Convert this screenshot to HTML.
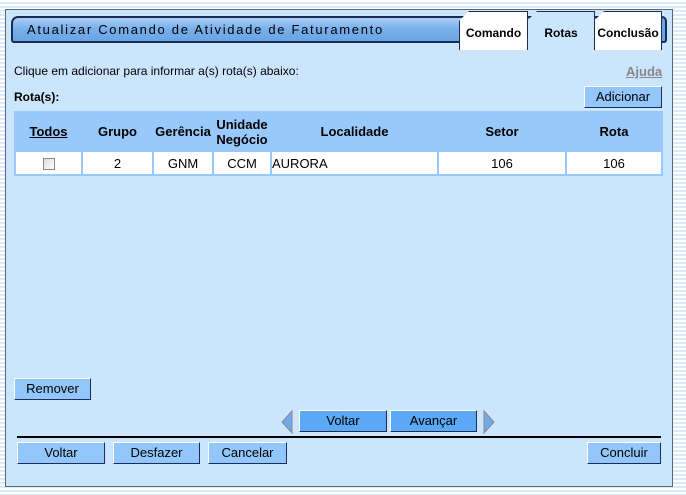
<!DOCTYPE html>
<html><head><meta charset="utf-8"><style>
*{margin:0;padding:0;box-sizing:border-box}
body{width:686px;height:495px;overflow:hidden;font-family:"Liberation Sans",sans-serif;font-size:12px;color:#000;
background:repeating-linear-gradient(#fff 0 2px,#dbeaf8 2px 4px);position:relative}
.panel{position:absolute;left:5px;top:9px;width:668px;height:478px;background:#cbe5fc;border:1px solid #5a6a7a}
.abs{position:absolute}
.title{left:11px;top:16px;width:460px;height:27px;background:linear-gradient(#a8cef4,#77aeea 50%,#6aa4e4);border:2px solid #1a2d55;border-right:none;border-radius:7px 0 0 3px;font-size:13px;letter-spacing:1.7px;padding:4px 0 0 14px}
.tab{top:11px;height:39px;border:1px solid #1a2d55;border-bottom:none;background:#fff;font-weight:bold;font-size:12px;font-family:"Liberation Sans Narrow","Liberation Sans",sans-serif;text-align:center;padding-top:14px;clip-path:polygon(10px 0,100% 0,100% 100%,0 100%,0 10px)}
.btn{position:absolute;height:22px;background:#93c6fb;border:1px solid #fff;border-right-color:#1a2d55;border-bottom-color:#1a2d55;text-align:center;font-size:13px;line-height:20px}
.nb{background:#5aa8f6;border-color:#1a2d55;border-top-color:#fff;border-left-color:#fff}
table{position:absolute;left:14px;top:111px;width:649px;border-collapse:separate;border-spacing:2px;background:#99c9fa}
th{height:37px;font-size:13px;font-weight:bold;line-height:15px}
td{background:#fff;height:22px;text-align:center;font-size:13px}
</style></head><body>
<div class="panel"></div>
<div class="abs title">Atualizar Comando de Atividade de Faturamento</div>
<div class="abs" style="left:470px;top:16px;width:197px;height:27px;background:#6aa4e4;border:2px solid #1a2d55;border-left:none;border-radius:0 5px 3px 0"></div>
<div class="abs tab" style="left:459px;width:69px">Comando</div>
<div class="abs tab" style="left:527px;width:68px;background:#cbe5fc;border-bottom:none">Rotas</div>
<div class="abs tab" style="left:594px;width:68px">Conclusão</div>
<div class="abs" style="left:14px;top:64px">Clique em adicionar para informar a(s) rota(s) abaixo:</div>
<div class="abs" style="left:626px;top:64px;color:#888;font-weight:bold;text-decoration:underline;font-size:13px">Ajuda</div>
<div class="abs" style="left:14px;top:90px;font-weight:bold">Rota(s):</div>
<div class="btn" style="left:584px;top:86px;width:78px">Adicionar</div>
<table>
<tr><th style="width:65px"><u>Todos</u></th><th style="width:69px">Grupo</th><th style="width:58px">Gerência</th><th style="width:56px">Unidade<br>Negócio</th><th style="width:165px">Localidade</th><th style="width:126px">Setor</th><th>Rota</th></tr>
<tr><td><span style="display:inline-block;width:12px;height:12px;border:1px solid #888;background:linear-gradient(135deg,#ddd,#fff);vertical-align:middle"></span></td><td>2</td><td>GNM</td><td>CCM</td><td style="text-align:left">AURORA</td><td>106</td><td>106</td></tr>
</table>
<div class="btn" style="left:14px;top:378px;width:77px">Remover</div>
<svg class="abs" style="left:280px;top:410px" width="14" height="24"><polygon points="12,1 12,23 2,12" fill="#6ea9e8" stroke="#888"/></svg>
<div class="btn nb" style="left:299px;top:410px;width:88px">Voltar</div>
<div class="btn nb" style="left:390px;top:410px;width:87px">Avançar</div>
<svg class="abs" style="left:482px;top:410px" width="14" height="24"><polygon points="2,1 2,23 12,12" fill="#6ea9e8" stroke="#888"/></svg>
<div class="abs" style="left:17px;top:436px;width:644px;height:2px;background:#000"></div>
<div class="btn" style="left:17px;top:442px;width:88px">Voltar</div>
<div class="btn" style="left:113px;top:442px;width:87px">Desfazer</div>
<div class="btn" style="left:208px;top:442px;width:79px">Cancelar</div>
<div class="btn" style="left:587px;top:442px;width:74px">Concluir</div>
</body></html>
